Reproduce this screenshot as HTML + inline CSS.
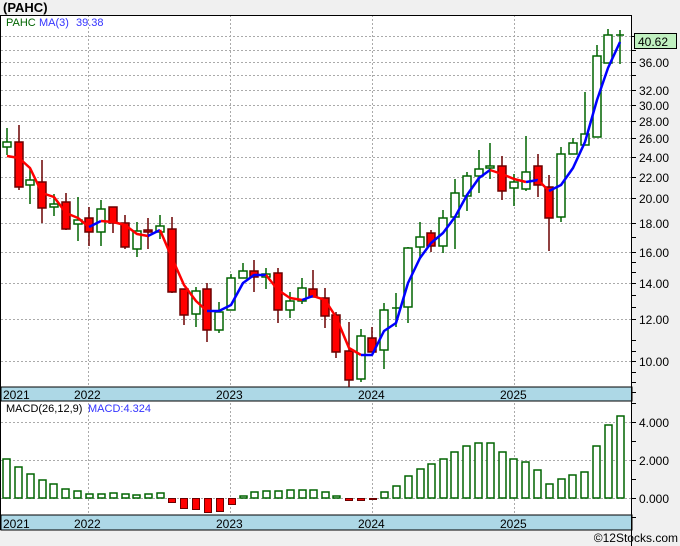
<!DOCTYPE html>
<html><head><meta charset="utf-8"><style>
html,body{margin:0;padding:0;background:#f0f0f0;}
svg{display:block;font-family:"Liberation Sans","DejaVu Sans",sans-serif;}
</style></head><body>
<svg width="680" height="546" viewBox="0 0 680 546" xmlns="http://www.w3.org/2000/svg">
<rect x="0" y="0" width="680" height="546" fill="#f0f0f0"/>
<text x="3" y="12" font-size="13" font-weight="bold" fill="#000">(PAHC)</text>
<rect x="1" y="15" width="631" height="372" fill="#fff"/>
<rect x="1" y="401" width="631" height="114" fill="#fff"/>
<g stroke="#aaa" stroke-dasharray="2,2" stroke-width="1">
<line x1="1" x2="632" y1="36.5" y2="36.5"/><line x1="1" x2="632" y1="50.5" y2="50.5"/>
<line x1="1" x2="632" y1="62.5" y2="62.5"/><line x1="1" x2="632" y1="75.5" y2="75.5"/>
<line x1="1" x2="632" y1="90.5" y2="90.5"/><line x1="1" x2="632" y1="105.5" y2="105.5"/>
<line x1="1" x2="632" y1="121.5" y2="121.5"/><line x1="1" x2="632" y1="138.5" y2="138.5"/>
<line x1="1" x2="632" y1="157.5" y2="157.5"/><line x1="1" x2="632" y1="177.5" y2="177.5"/>
<line x1="1" x2="632" y1="198.5" y2="198.5"/><line x1="1" x2="632" y1="223.5" y2="223.5"/>
<line x1="1" x2="632" y1="252.5" y2="252.5"/><line x1="1" x2="632" y1="283.5" y2="283.5"/>
<line x1="1" x2="632" y1="319.5" y2="319.5"/><line x1="1" x2="632" y1="361.5" y2="361.5"/>
<line x1="1" x2="632" y1="422.5" y2="422.5"/><line x1="1" x2="632" y1="460.5" y2="460.5"/>
<line x1="1" x2="632" y1="498.5" y2="498.5"/>
<line x1="88.5" x2="88.5" y1="15" y2="515"/><line x1="230.5" x2="230.5" y1="15" y2="515"/>
<line x1="372.5" x2="372.5" y1="15" y2="515"/><line x1="514.5" x2="514.5" y1="15" y2="515"/>
</g>
<!-- date bands -->
<rect x="1" y="387" width="631" height="14" fill="#add8e6" stroke="#000"/>
<rect x="1" y="515" width="631" height="15" fill="#add8e6" stroke="#000"/>
<g font-size="12" fill="#000">
<text x="3" y="399">2021</text><text x="74" y="399">2022</text><text x="216" y="399">2023</text><text x="358" y="399">2024</text><text x="500" y="399">2025</text>
<text x="3" y="528">2021</text><text x="74" y="528">2022</text><text x="216" y="528">2023</text><text x="358" y="528">2024</text><text x="500" y="528">2025</text>
</g>
<line x1="0.5" y1="15" x2="0.5" y2="530" stroke="#000"/>
<line x1="0" y1="15.5" x2="632" y2="15.5" stroke="#000"/>
<line x1="631.5" y1="15" x2="631.5" y2="546" stroke="#000"/>
<!-- axis ticks -->
<g stroke="#000">
<line x1="632" x2="636" y1="36.5" y2="36.5"/><line x1="632" x2="636" y1="50.5" y2="50.5"/><line x1="632" x2="636" y1="62.5" y2="62.5"/><line x1="632" x2="636" y1="75.5" y2="75.5"/><line x1="632" x2="636" y1="90.5" y2="90.5"/><line x1="632" x2="636" y1="105.5" y2="105.5"/><line x1="632" x2="636" y1="121.5" y2="121.5"/><line x1="632" x2="636" y1="138.5" y2="138.5"/><line x1="632" x2="636" y1="157.5" y2="157.5"/><line x1="632" x2="636" y1="177.5" y2="177.5"/><line x1="632" x2="636" y1="198.5" y2="198.5"/><line x1="632" x2="636" y1="223.5" y2="223.5"/><line x1="632" x2="636" y1="237.5" y2="237.5"/><line x1="632" x2="636" y1="252.5" y2="252.5"/><line x1="632" x2="636" y1="262.5" y2="262.5"/><line x1="632" x2="636" y1="272.5" y2="272.5"/><line x1="632" x2="636" y1="283.5" y2="283.5"/><line x1="632" x2="636" y1="295.5" y2="295.5"/><line x1="632" x2="636" y1="307.5" y2="307.5"/><line x1="632" x2="636" y1="319.5" y2="319.5"/><line x1="632" x2="636" y1="340.5" y2="340.5"/><line x1="632" x2="636" y1="351.5" y2="351.5"/><line x1="632" x2="636" y1="361.5" y2="361.5"/><line x1="632" x2="636" y1="372.5" y2="372.5"/><line x1="632" x2="636" y1="382.5" y2="382.5"/><line x1="632" x2="636" y1="392.5" y2="392.5"/>
<line x1="632" x2="636" y1="403.5" y2="403.5"/><line x1="632" x2="636" y1="422.5" y2="422.5"/><line x1="632" x2="636" y1="441.5" y2="441.5"/><line x1="632" x2="636" y1="460.5" y2="460.5"/><line x1="632" x2="636" y1="479.5" y2="479.5"/><line x1="632" x2="636" y1="498.5" y2="498.5"/><line x1="632" x2="636" y1="517.5" y2="517.5"/>
</g>
<g font-size="12" fill="#000">
<text x="639" y="67">36.00</text><text x="639" y="95">32.00</text><text x="639" y="110">30.00</text><text x="639" y="126">28.00</text><text x="639" y="143">26.00</text><text x="639" y="162">24.00</text><text x="639" y="182">22.00</text><text x="639" y="203">20.00</text><text x="639" y="228">18.00</text><text x="639" y="257">16.00</text><text x="639" y="288">14.00</text><text x="639" y="324">12.00</text><text x="639" y="366">10.00</text>
<text x="639" y="427">4.000</text><text x="639" y="465">2.000</text><text x="639" y="503">0.000</text>
</g>
<rect x="634.5" y="33.5" width="42" height="15" fill="#c0f0c0" stroke="#000"/>
<text x="638" y="46" font-size="12" fill="#000">40.62</text>
<g font-size="11">
<text x="6" y="26" fill="#006400">PAHC</text><text x="39" y="26" fill="#3333ff">MA(3)</text><text x="76" y="26" fill="#3333ff">39.38</text>
<text x="6" y="412" fill="#000">MACD(26,12,9)</text><text x="88" y="412" fill="#3333ff">MACD:4.324</text>
</g>
<text x="678" y="542" font-size="12" fill="#000" text-anchor="end">©12Stocks.com</text>
<!-- candles -->
<g stroke-width="1.5">
<g stroke="#006400" fill="#fff">
<line x1="7" x2="7" y1="128" y2="155"/><rect x="3" y="142" width="8" height="5"/>
<line x1="30" x2="30" y1="168" y2="204"/><rect x="26" y="180" width="8" height="5"/>
<line x1="54" x2="54" y1="194" y2="216"/><rect x="50" y="204" width="8" height="3"/>
<line x1="78" x2="78" y1="197" y2="241"/><rect x="74" y="220" width="8" height="4"/>
<line x1="101" x2="101" y1="200" y2="246"/><rect x="97" y="209" width="8" height="23"/>
<line x1="137" x2="137" y1="222" y2="257"/><rect x="133" y="231" width="8" height="18"/>
<line x1="160" x2="160" y1="215" y2="239"/><rect x="156" y="226" width="8" height="6"/>
<line x1="196" x2="196" y1="287" y2="327"/><rect x="192" y="291" width="8" height="23"/>
<line x1="219" x2="219" y1="302" y2="333"/><rect x="215" y="312" width="8" height="18"/>
<line x1="231" x2="231" y1="274" y2="310"/><rect x="227" y="278" width="8" height="32"/>
<line x1="243" x2="243" y1="263" y2="278"/><rect x="239" y="271" width="8" height="7"/>
<line x1="266" x2="266" y1="268" y2="289"/><rect x="262" y="274" width="8" height="3"/>
<line x1="290" x2="290" y1="292" y2="318"/><rect x="286" y="301" width="8" height="9"/>
<line x1="302" x2="302" y1="278" y2="304"/><rect x="298" y="288" width="8" height="13"/>
<line x1="361" x2="361" y1="329" y2="382"/><rect x="357" y="336" width="8" height="43"/>
<line x1="384" x2="384" y1="303" y2="369"/><rect x="380" y="310" width="8" height="40"/>
<line x1="396" x2="396" y1="293" y2="327"/><line x1="392" x2="400" y1="308" y2="308"/>
<line x1="408" x2="408" y1="247" y2="323"/><rect x="404" y="248" width="8" height="59"/>
<line x1="420" x2="420" y1="222" y2="257"/><rect x="416" y="237" width="8" height="10"/>
<line x1="443" x2="443" y1="210" y2="253"/><rect x="439" y="218" width="8" height="28"/>
<line x1="455" x2="455" y1="179" y2="249"/><rect x="451" y="193" width="8" height="24"/>
<line x1="467" x2="467" y1="172" y2="211"/><rect x="463" y="176" width="8" height="20"/>
<line x1="479" x2="479" y1="150" y2="193"/><rect x="475" y="169" width="8" height="7"/>
<line x1="490" x2="490" y1="143" y2="179"/><rect x="486" y="166" width="8" height="2"/>
<line x1="514" x2="514" y1="174" y2="206"/><rect x="510" y="182" width="8" height="6"/>
<line x1="526" x2="526" y1="136" y2="191"/><rect x="522" y="172" width="8" height="17"/>
<line x1="561" x2="561" y1="147" y2="222"/><rect x="557" y="154" width="8" height="63"/>
<line x1="573" x2="573" y1="138" y2="154"/><rect x="569" y="143" width="8" height="11"/>
<line x1="585" x2="585" y1="92" y2="145"/><rect x="581" y="134" width="8" height="11"/>
<line x1="597" x2="597" y1="45" y2="137"/><rect x="593" y="56" width="8" height="81"/>
<line x1="608" x2="608" y1="29" y2="63"/><rect x="604" y="35" width="8" height="28"/>
<line x1="620" x2="620" y1="30" y2="64"/><line x1="616" x2="624" y1="35" y2="35"/>
</g>
<g stroke="#6b0000" fill="#f00">
<line x1="19" x2="19" y1="125" y2="190"/><rect x="15" y="142" width="8" height="45"/>
<line x1="42" x2="42" y1="160" y2="223"/><rect x="38" y="182" width="8" height="26"/>
<line x1="66" x2="66" y1="193" y2="230"/><rect x="62" y="202" width="8" height="27"/>
<line x1="89" x2="89" y1="207" y2="246"/><rect x="85" y="218" width="8" height="14"/>
<line x1="113" x2="113" y1="207" y2="233"/><rect x="109" y="207" width="8" height="16"/>
<line x1="125" x2="125" y1="215" y2="249"/><rect x="121" y="223" width="8" height="24"/>
<line x1="148" x2="148" y1="218" y2="249"/><rect x="144" y="230" width="8" height="2"/>
<line x1="172" x2="172" y1="217" y2="293"/><rect x="168" y="229" width="8" height="63"/>
<line x1="184" x2="184" y1="289" y2="325"/><rect x="180" y="289" width="8" height="26"/>
<line x1="207" x2="207" y1="283" y2="342"/><rect x="203" y="289" width="8" height="41"/>
<line x1="254" x2="254" y1="260" y2="292"/><rect x="250" y="271" width="8" height="6"/>
<line x1="278" x2="278" y1="268" y2="323"/><rect x="274" y="273" width="8" height="37"/>
<line x1="313" x2="313" y1="270" y2="297"/><rect x="309" y="289" width="8" height="8"/>
<line x1="325" x2="325" y1="288" y2="328"/><rect x="321" y="298" width="8" height="18"/>
<line x1="336" x2="336" y1="312" y2="358"/><rect x="332" y="315" width="8" height="37"/>
<line x1="349" x2="349" y1="322" y2="387"/><rect x="345" y="351" width="8" height="29"/>
<line x1="372" x2="372" y1="327" y2="352"/><rect x="368" y="338" width="8" height="14"/>
<line x1="431" x2="431" y1="230" y2="252"/><rect x="427" y="233" width="8" height="13"/>
<line x1="502" x2="502" y1="156" y2="200"/><rect x="498" y="166" width="8" height="25"/>
<line x1="538" x2="538" y1="154" y2="197"/><rect x="534" y="166" width="8" height="19"/>
<line x1="549" x2="549" y1="175" y2="251"/><rect x="545" y="187" width="8" height="31"/>
</g>
</g>
<!-- MA -->
<g fill="none" stroke-width="2.5" stroke-linejoin="round">
<polyline stroke="#f00" points="7,156 19,158 30,168 42,193 54,197 66,213 78,218 89,227"/>
<polyline stroke="#00f" points="89,227 101,221"/>
<polyline stroke="#f00" points="101,221 113,222 125,225 137,234 148,236"/>
<polyline stroke="#00f" points="148,236 160,230"/>
<polyline stroke="#f00" points="160,230 172,258 184,285 196,301 207,311"/>
<polyline stroke="#00f" points="207,311 219,311 231,305 243,283 254,275 266,275"/>
<polyline stroke="#f00" points="266,275 278,290 290,298 302,300"/>
<polyline stroke="#00f" points="302,300 313,296"/>
<polyline stroke="#f00" points="313,296 325,300 336,317 349,348 361,355"/>
<polyline stroke="#00f" points="361,355 372,355 384,331 396,323 408,283 420,258 431,243 443,233 455,217 467,195 479,178 490,170"/>
<polyline stroke="#f00" points="490,170 502,174 514,179 526,182"/>
<polyline stroke="#00f" points="526,182 538,180"/>
<polyline stroke="#f00" points="538,180 549,191"/>
<polyline stroke="#00f" points="549,191 561,185 573,168 585,142 597,100 608,68 620,42"/>
</g>
<!-- MACD bars -->
<g stroke="#006400" fill="#fff" stroke-width="1.5">
<rect x="3" y="459" width="7" height="39"/><rect x="15" y="467" width="7" height="31"/><rect x="27" y="474" width="7" height="24"/><rect x="39" y="480" width="7" height="18"/><rect x="50" y="484" width="7" height="14"/><rect x="62" y="489" width="7" height="9"/><rect x="74" y="491" width="7" height="7"/><rect x="86" y="494" width="7" height="4"/><rect x="98" y="494" width="7" height="4"/><rect x="110" y="493" width="7" height="5"/><rect x="122" y="494" width="7" height="4"/><rect x="133" y="495" width="7" height="3"/><rect x="145" y="494" width="7" height="4"/><rect x="157" y="493" width="7" height="5"/>
<rect x="240" y="496" width="7" height="2"/><rect x="251" y="492" width="7" height="6"/><rect x="263" y="491" width="7" height="7"/><rect x="275" y="491" width="7" height="7"/><rect x="287" y="490" width="7" height="8"/><rect x="299" y="490" width="7" height="8"/><rect x="310" y="490" width="7" height="8"/><rect x="322" y="492" width="7" height="6"/><rect x="333" y="496" width="7" height="2"/>
<rect x="381" y="492" width="7" height="6"/><rect x="393" y="486" width="7" height="12"/><rect x="405" y="476" width="7" height="22"/><rect x="417" y="469" width="7" height="29"/><rect x="428" y="464" width="7" height="34"/><rect x="440" y="459" width="7" height="39"/><rect x="451" y="452" width="7" height="46"/><rect x="463" y="446" width="7" height="52"/><rect x="475" y="443" width="7" height="55"/><rect x="487" y="443" width="7" height="55"/><rect x="499" y="452" width="7" height="46"/><rect x="510" y="459" width="7" height="39"/><rect x="522" y="462" width="7" height="36"/><rect x="534" y="470" width="7" height="28"/><rect x="546" y="484" width="7" height="14"/><rect x="558" y="479" width="7" height="19"/><rect x="569" y="475" width="7" height="23"/><rect x="581" y="472" width="7" height="26"/><rect x="593" y="446" width="7" height="52"/><rect x="605" y="425" width="7" height="73"/><rect x="617" y="416" width="7" height="82"/>
</g>
<g stroke="#6b0000" fill="#f00" stroke-width="1">
<rect x="168.5" y="498.5" width="7" height="4"/><rect x="180.5" y="498.5" width="7" height="10"/><rect x="192.5" y="498.5" width="7" height="11"/><rect x="204.5" y="498.5" width="7" height="14"/><rect x="216.5" y="498.5" width="7" height="13"/><rect x="228.5" y="498.5" width="7" height="6"/>
<rect x="345.5" y="498.5" width="7" height="2"/><rect x="357.5" y="498.5" width="7" height="2"/><rect x="369.5" y="498.5" width="7" height="1"/>
</g>
</svg>
</body></html>
